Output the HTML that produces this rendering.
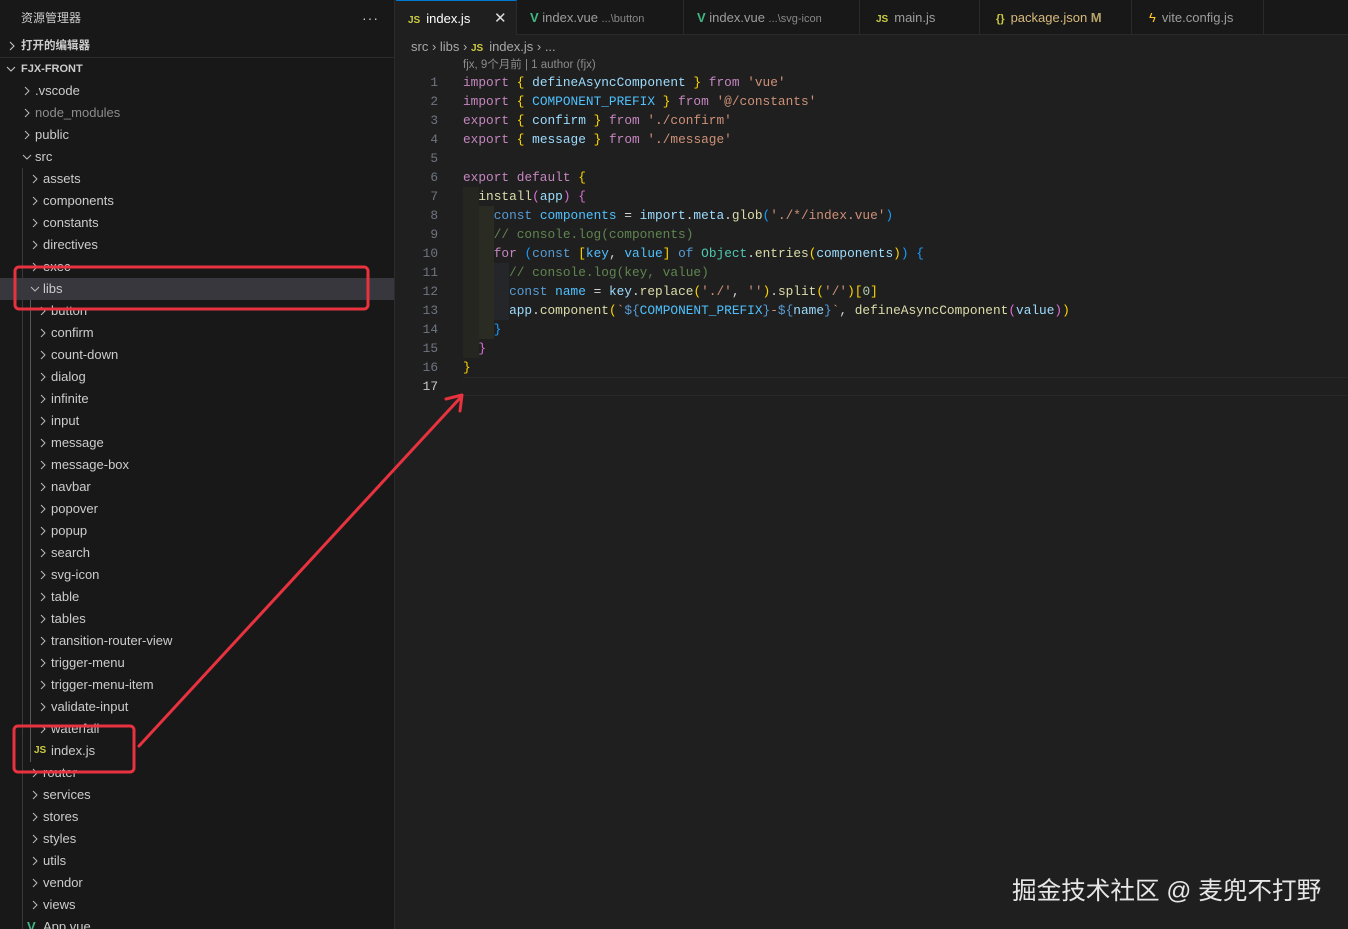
<!DOCTYPE html>
<html><head><meta charset="utf-8"><style>
*{margin:0;padding:0;box-sizing:border-box}
html,body{width:1348px;height:929px;overflow:hidden}
body{background:#1f1f1f;font-family:"Liberation Sans","Noto Sans CJK SC",sans-serif;color:#cccccc;position:relative}
#side{position:absolute;left:0;top:0;width:395px;height:929px;background:#181818;border-right:1px solid #2b2b2b}
.r{position:absolute;height:22px;line-height:22px;font-size:13px;color:#cccccc;white-space:nowrap;left:0;right:0}
.ch{position:absolute;top:0;font-size:12px;color:#c5c5c5}
.ch svg{position:absolute;top:6px}
.guide{position:absolute;width:1px;background:#3a3a3a}
#tabs{position:absolute;left:396px;top:0;right:0;height:35px;background:#181818;border-bottom:1px solid #2b2b2b}
.tab{position:absolute;top:0;height:35px;line-height:36px;font-size:13px;color:#9d9d9d;border-right:1px solid #2b2b2b;padding-left:13px;white-space:nowrap}
.js{color:#cbcb41;font-weight:bold;font-size:10px;margin-right:6px}
.code{position:absolute;left:463px;font-family:"Liberation Mono",monospace;font-size:12.8px;white-space:pre;color:#d4d4d4;height:19px;line-height:19px}
.ln{position:absolute;left:400px;width:38px;text-align:right;font-family:"Liberation Mono",monospace;font-size:12.8px;color:#6e7681;height:19px;line-height:19px}
.k{color:#c586c0}.b{color:#569cd6}.v{color:#9cdcfe}.s{color:#ce9178}.y{color:#ffd700}.p{color:#da70d6}.bl{color:#179fff}.c{color:#5f8650}.f{color:#dcdcaa}.t{color:#4ec9b0}.cn{color:#4fc1ff}.n{color:#b5cea8}
</style></head><body>
<div id="side">
<div class="r" style="top:7px;left:21px;font-size:12px">资源管理器</div>
<div class="r" style="top:7px;left:362px;font-size:14px;letter-spacing:1px">···</div>
<div class="r" style="top:35px;font-size:11.5px;font-weight:bold"><span class="ch" style="left:7px"><svg width="10" height="10" style="left:0"><path d="M3 1 L7 5 L3 9" fill="none" stroke="#c5c5c5" stroke-width="1.1"/></svg></span><span style="position:absolute;left:21px">打开的编辑器</span></div>
<div style="position:absolute;left:0;right:0;top:57px;height:1px;background:#2b2b2b"></div>
<div class="r" style="top:58px;font-size:11px;font-weight:bold"><span class="ch" style="left:6px"><svg width="10" height="10" style="left:0"><path d="M1 3 L5 7 L9 3" fill="none" stroke="#c5c5c5" stroke-width="1.1"/></svg></span><span style="position:absolute;left:21px">FJX-FRONT</span></div>
<div id="tree"></div>
<div class="guide" style="left:22px;top:168px;height:762px"></div>
<div class="guide" style="left:30px;top:300px;height:462px;background:#585858"></div>
</div>
<div id="tabs">
<div class="tab" style="left:0;width:121px;background:#1f1f1f;color:#fff;border-top:1px solid #0078d4;padding-left:12px"><span class="js">JS</span>index.js<span style="position:absolute;left:98px;color:#ddd;font-size:15px">✕</span></div>
<div class="tab" style="left:121px;width:167px"><span style="color:#41b883;font-weight:bold">V</span> index.vue <span style="font-size:11px;color:#888">...\button</span></div>
<div class="tab" style="left:288px;width:176px"><span style="color:#41b883;font-weight:bold">V</span> index.vue <span style="font-size:11px;color:#888">...\svg-icon</span></div>
<div class="tab" style="left:464px;width:120px;padding-left:16px"><span class="js">JS</span>main.js</div>
<div class="tab" style="left:584px;width:152px;color:#d7ba7d;padding-left:16px"><span style="color:#cbcb41;font-weight:bold;font-size:11px;margin-right:6px">{}</span>package.json <b style="color:#b8a36a">M</b></div>
<div class="tab" style="left:736px;width:132px;padding-left:17px"><span style="color:#ffca28;margin-right:6px">ϟ</span>vite.config.js</div>
</div>
<div style="position:absolute;left:411px;top:37px;font-size:13px;color:#a9a9a9;line-height:19px">src › libs › <span class="js">JS</span>index.js › ...</div>
<div style="position:absolute;left:463px;top:57px;font-size:11.5px;color:#8b8b8b;line-height:16px">fjx, 9个月前 | 1 author (fjx)</div>
<div style="position:absolute;left:463px;top:377px;width:885px;height:19px;border-top:1px solid #282828;border-bottom:1px solid #282828"></div>
<div style="position:absolute;left:463px;top:187px;width:16px;height:171px;background:#25261f"></div>
<div style="position:absolute;left:479px;top:206px;width:15px;height:133px;background:#2a2b22"></div>
<div style="position:absolute;left:494px;top:263px;width:15px;height:57px;background:#25262a"></div>
<div id="code"></div>
<div style="position:absolute;left:1012px;top:871px;font-size:24.6px;color:#e6e6e6;font-family:'Liberation Sans','Noto Sans CJK SC',sans-serif">掘金技术社区 @ 麦兜不打野</div>
<svg style="position:absolute;left:0;top:0" width="1348" height="929">
<g fill="none" stroke="#e8323f" stroke-width="3" stroke-linejoin="round" stroke-linecap="round">
<rect x="15" y="267" width="353" height="42" rx="4"/>
<rect x="14" y="726" width="120" height="46" rx="4"/>
<path d="M139 746 L461 397"/>
<path d="M446 399 L462 395 L460 411"/>
</g></svg>
<script>
var items=[[1,'.vscode'],[1,'node_modules',1],[1,'public'],[1,'src',0,1],[2,'assets'],[2,'components'],[2,'constants'],[2,'directives'],[2,'exec'],[2,'libs',0,1],[3,'button'],[3,'confirm'],[3,'count-down'],[3,'dialog'],[3,'infinite'],[3,'input'],[3,'message'],[3,'message-box'],[3,'navbar'],[3,'popover'],[3,'popup'],[3,'search'],[3,'svg-icon'],[3,'table'],[3,'tables'],[3,'transition-router-view'],[3,'trigger-menu'],[3,'trigger-menu-item'],[3,'validate-input'],[3,'waterfall'],[3,'index.js',0,0,'js'],[2,'router'],[2,'services'],[2,'stores'],[2,'styles'],[2,'utils'],[2,'vendor'],[2,'views'],[2,'App.vue',0,0,'vue']];
var h='';items.forEach(function(it,i){var top=80+22*i;var lv=it[0];var cx=[0,22,30,38][lv];var tx=cx+13;
var bg=it[1]=='libs'?'background:#37373d;':'';
var ic;if(it[4]=='js')ic='<span style="position:absolute;left:'+(tx-17)+'px;color:#cbcb41;font-weight:bold;font-size:10px">JS</span>';
else if(it[4]=='vue')ic='<span style="position:absolute;left:'+(tx-16)+'px;color:#41b883;font-weight:bold">V</span>';
else ic='<span class="ch" style="left:'+cx+'px"><svg width="10" height="10" style="left:0"><path d="'+(it[3]?'M1 3 L5 7 L9 3':'M3 1 L7 5 L3 9')+'" fill="none" stroke="#bbbbbb" stroke-width="1"/></svg></span>';
h+='<div class="r" style="top:'+top+'px;'+bg+(it[2]?'color:#8c8c8c;':'')+'">'+ic+'<span style="position:absolute;left:'+tx+'px">'+it[1]+'</span></div>';});
document.getElementById('tree').innerHTML=h;
var L=['<span class="k">import</span> <span class="y">{</span> <span class="v">defineAsyncComponent</span> <span class="y">}</span> <span class="k">from</span> <span class="s">\'vue\'</span>',
'<span class="k">import</span> <span class="y">{</span> <span class="cn">COMPONENT_PREFIX</span> <span class="y">}</span> <span class="k">from</span> <span class="s">\'@/constants\'</span>',
'<span class="k">export</span> <span class="y">{</span> <span class="v">confirm</span> <span class="y">}</span> <span class="k">from</span> <span class="s">\'./confirm\'</span>',
'<span class="k">export</span> <span class="y">{</span> <span class="v">message</span> <span class="y">}</span> <span class="k">from</span> <span class="s">\'./message\'</span>',
'',
'<span class="k">export</span> <span class="k">default</span> <span class="y">{</span>',
'  <span class="f">install</span><span class="p">(</span><span class="v">app</span><span class="p">)</span> <span class="p">{</span>',
'    <span class="b">const</span> <span class="cn">components</span> = <span class="v">import</span>.<span class="v">meta</span>.<span class="f">glob</span><span class="bl">(</span><span class="s">\'./*/index.vue\'</span><span class="bl">)</span>',
'    <span class="c">// console.log(components)</span>',
'    <span class="k">for</span> <span class="bl">(</span><span class="b">const</span> <span class="y">[</span><span class="cn">key</span>, <span class="cn">value</span><span class="y">]</span> <span class="b">of</span> <span class="t">Object</span>.<span class="f">entries</span><span class="y">(</span><span class="v">components</span><span class="y">)</span><span class="bl">)</span> <span class="bl">{</span>',
'      <span class="c">// console.log(key, value)</span>',
'      <span class="b">const</span> <span class="cn">name</span> = <span class="v">key</span>.<span class="f">replace</span><span class="y">(</span><span class="s">\'./\'</span>, <span class="s">\'\'</span><span class="y">)</span>.<span class="f">split</span><span class="y">(</span><span class="s">\'/\'</span><span class="y">)[</span><span class="n">0</span><span class="y">]</span>',
'      <span class="v">app</span>.<span class="f">component</span><span class="y">(</span><span class="s">`</span><span class="b">${</span><span class="cn">COMPONENT_PREFIX</span><span class="b">}</span><span class="s">-</span><span class="b">${</span><span class="v">name</span><span class="b">}</span><span class="s">`</span>, <span class="f">defineAsyncComponent</span><span class="p">(</span><span class="v">value</span><span class="p">)</span><span class="y">)</span>',
'    <span class="bl">}</span>','  <span class="p">}</span>','<span class="y">}</span>',''];
var c='';L.forEach(function(l,i){var t=73+19*i;c+='<div class="ln" style="top:'+t+'px;'+(i==16?'color:#ccc':'')+'">'+(i+1)+'</div><div class="code" style="top:'+t+'px">'+l+'</div>';});
document.getElementById('code').innerHTML=c;
</script>
</body></html>
